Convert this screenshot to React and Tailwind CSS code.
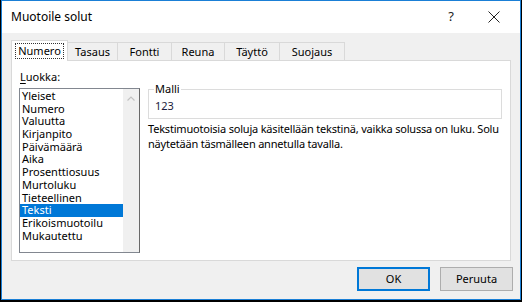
import React, { useState } from 'react';

const categories = [
  "Yleiset",
  "Numero",
  "Valuutta",
  "Kirjanpito",
  "Päivämäärä",
  "Aika",
  "Prosenttiosuus",
  "Murtoluku",
  "Tieteellinen",
  "Teksti",
  "Erikoismuotoilu",
  "Mukautettu",
];

const tabs = [
  { label: "Numero", w: "w-[57px]" },
  { label: "Tasaus", w: "w-[50px]" },
  { label: "Fontti", w: "w-[54px]" },
  { label: "Reuna", w: "w-[53px]" },
  { label: "Täyttö", w: "w-[55px]" },
  { label: "Suojaus", w: "w-[65px]" },
];

const App = () => {
  const [activeTab, setActiveTab] = useState(0);
  const [selected, setSelected] = useState(9);

  return (
    <div className="w-[522px] h-[302px] bg-black pl-px pr-px pb-[2px] font-['Noto_Sans',sans-serif] text-[11px] text-[#000] select-none">
      <div className="w-[520px] h-[300px] border border-[#1a7fd6] bg-[#f0f0f0] flex flex-col">
        {/* Title bar */}
        <div className="h-[32px] bg-white flex items-center shrink-0">
          <span className="ml-[9px] text-[12px] text-[#000]">Muotoile solut</span>
          <div className="ml-auto flex items-center">
            <button className="w-[40px] h-[30px] flex items-center justify-center text-[13px] text-[#222]">?</button>
            <button className="w-[46px] h-[30px] flex items-center justify-center mr-[3px]">
              <svg width="12" height="12" viewBox="0 0 12 12" fill="none" stroke="#222" strokeWidth="1">
                <path d="M0.5 0.5L11.5 11.5M11.5 0.5L0.5 11.5" />
              </svg>
            </button>
          </div>
        </div>

        {/* Tabs */}
        <div className="px-[9px] pt-[7px] flex flex-col">
          <div className="flex items-end h-[20px] relative z-10">
            {tabs.map((t, i) => {
              const active = i === activeTab;
              return (
                <button
                  key={t.label}
                  onClick={() => setActiveTab(i)}
                  className={
                    active
                      ? `${t.w} h-[21px] -mb-px bg-white border border-b-0 border-[#d9d9d9] flex items-center justify-center`
                      : `${t.w} h-[18px] bg-[#f0f0f0] border border-b-0 border-l-0 border-[#d9d9d9] flex items-center justify-center`
                  }
                >
                  <span
                    className={
                      active
                        ? "px-[2px] leading-[14px] outline outline-1 outline-dotted outline-[#333]"
                        : "leading-[14px]"
                    }
                  >
                    {t.label}
                  </span>
                </button>
              );
            })}
          </div>

          {/* Panel */}
          <div className="h-[201px] bg-white border border-[#d9d9d9] flex pt-[9px] pl-[7px] pr-[8px]">
            <div className="flex flex-col w-[121px] shrink-0">
              <div className="leading-[14px] ml-[1px]">
                <span className="underline underline-offset-2">L</span>uokka:
              </div>
              <div className="mt-[4px] h-[165px] border border-[#828790] border-r-[#696969] flex">
                <div className="flex-1 flex flex-col pt-[1px]">
                  {categories.map((c, i) => (
                    <div
                      key={c}
                      onClick={() => setSelected(i)}
                      className={
                        i === selected
                          ? "h-[12.7px] leading-[12.7px] pl-[2px] bg-[#0078d7] text-white"
                          : "h-[12.7px] leading-[12.7px] pl-[2px]"
                      }
                    >
                      {c}
                    </div>
                  ))}
                </div>
                <div className="w-[16px] bg-[#f0f0f0] flex flex-col items-center pt-[7px]">
                  <svg width="8" height="5" viewBox="0 0 8 5" fill="none" stroke="#c2c2c2" strokeWidth="1.2">
                    <path d="M0.5 4.5L4 1L7.5 4.5" />
                  </svg>
                </div>
              </div>
            </div>

            <div className="flex-1 ml-[8px] flex flex-col pt-[9px]">
              <div className="relative border border-[#dcdcdc] h-[30px] mt-[10px]">
                <span className="absolute -top-[8px] left-[5px] bg-white px-[1px] leading-[14px]">Malli</span>
                <div className="pt-[9px] pl-[6px] leading-[14px] text-[#1c1c3c]">123</div>
              </div>
              <p className="mt-[2px] leading-[15px] text-[#000] tracking-[-0.2px] whitespace-nowrap">
                Tekstimuotoisia soluja käsitellään tekstinä, vaikka solussa on luku. Solu
                <br />
                näytetään täsmälleen annetulla tavalla.
              </p>
            </div>
          </div>
        </div>

        {/* Buttons */}
        <div className="flex justify-end gap-[10px] pr-[7px] mt-[6px]">
          <button className="w-[73px] h-[24px] bg-[#e1e1e1] border-2 border-[#0078d7] flex items-center justify-center">
            OK
          </button>
          <button className="w-[73px] h-[24px] bg-[#e1e1e1] border border-[#adadad] flex items-center justify-center">
            Peruuta
          </button>
        </div>
      </div>
    </div>
  );
};

export default App;
